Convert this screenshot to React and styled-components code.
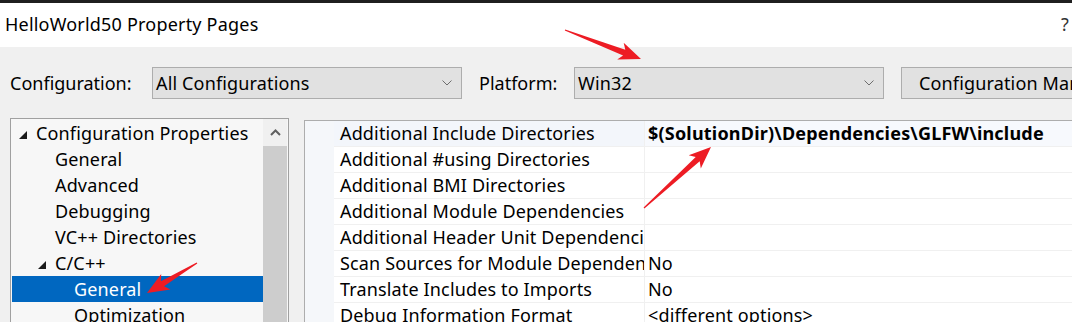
import styled, { createGlobalStyle } from 'styled-components';

const GlobalStyle = createGlobalStyle`
  html, body {
    margin: 0;
    padding: 0;
    overflow: hidden;
    background: #f0f0f0;
  }
`;

const FONT = `"Noto Sans", "Open Sans", sans-serif`;

const Page = styled.div`
  position: relative;
  width: 1072px;
  height: 322px;
  overflow: hidden;
  font-family: ${FONT};
  font-size: 18px;
  letter-spacing: 0.15px;
  color: #000;
  display: flex;
  flex-direction: column;
`;

const TopStrip = styled.div`
  height: 3px;
  flex-shrink: 0;
  background: #1f1f1f;
`;

const TitleBar = styled.div`
  height: 44px;
  flex-shrink: 0;
  background: #fff;
  display: flex;
  align-items: center;
  justify-content: space-between;
  padding: 0 3px 2px 5px;
  box-sizing: border-box;
`;

const Title = styled.span`
  letter-spacing: 0.2px;
`;

const Help = styled.span`
  color: #333;
`;

const Body = styled.div`
  flex: 1;
  min-height: 0;
  overflow: hidden;
  background: #f0f0f0;
  padding: 20px 0 0 10px;
  display: flex;
  flex-direction: column;
`;

const ConfigRow = styled.div`
  display: flex;
  align-items: center;
  height: 32px;
  flex-shrink: 0;
`;

const Label = styled.span`
  width: ${(p) => p.$w}px;
  margin-left: ${(p) => p.$ml || 0}px;
  flex-shrink: 0;
  letter-spacing: 0;
  white-space: nowrap;
`;

const Combo = styled.div`
  box-sizing: border-box;
  width: 310px;
  flex-shrink: 0;
  height: 32px;
  background: #e1e1e1;
  border: 1px solid #adadad;
  display: flex;
  align-items: center;
  justify-content: space-between;
  padding: 0 9px 0 3px;
`;

const Button = styled.div`
  box-sizing: border-box;
  margin-left: 17px;
  width: 220px;
  flex-shrink: 0;
  height: 32px;
  background: #e1e1e1;
  border: 1px solid #adadad;
  display: flex;
  align-items: center;
  padding-left: 17px;
  white-space: nowrap;
  overflow: hidden;
`;

const Panels = styled.div`
  display: flex;
  align-items: flex-start;
  margin-top: 19px;
`;

const Tree = styled.div`
  box-sizing: border-box;
  width: 279px;
  height: 230px;
  border: 1px solid #a0a0a0;
  background: #f7f7f7;
  display: flex;
  flex-shrink: 0;
`;

const TreeList = styled.div`
  flex: 1;
  padding: 1px 0 0 1px;
`;

const TreeRow = styled.div`
  height: 26px;
  display: flex;
  align-items: center;
  padding-left: ${(p) => 24 + p.$level * 19}px;
  white-space: nowrap;
  background: ${(p) => (p.$selected ? '#0067c0' : 'transparent')};
  color: ${(p) => (p.$selected ? '#fff' : '#000')};
`;

const Twisty = styled.span`
  width: 17px;
  margin-left: -17px;
  display: flex;
  align-items: center;
  padding-top: 3px;
`;

const ScrollBar = styled.div`
  width: 24px;
  height: 100%;
  margin-right: 1px;
  display: flex;
  flex-direction: column;
  background: #f0f0f0;
`;

const ScrollArrow = styled.div`
  height: 27px;
  display: flex;
  align-items: center;
  justify-content: center;
`;

const ScrollThumb = styled.div`
  flex: 1;
  background: #cdcdcd;
`;

const Grid = styled.div`
  margin-left: 15px;
  margin-top: 2px;
  flex: 1;
  border-left: 1px solid #adadad;
  border-top: 1px solid #adadad;
  background: #fff;
  display: flex;
  flex-direction: column;
  height: 230px;
`;

const GridRow = styled.div`
  display: flex;
  height: 26px;
  flex-shrink: 0;
`;

const Gutter = styled.div`
  width: 29px;
  background: #f5f7fa;
  flex-shrink: 0;
`;

const NameCell = styled.div`
  box-sizing: border-box;
  width: 310px;
  flex-shrink: 0;
  overflow: hidden;
  white-space: nowrap;
  padding-left: 6px;
  line-height: 25px;
  border-bottom: 1px solid #f0f0f0;
  background: ${(p) => (p.$active ? '#f3f6fb' : '#fff')};
`;

const ValueCell = styled.div`
  box-sizing: border-box;
  flex: 1;
  overflow: hidden;
  white-space: nowrap;
  padding-left: 3px;
  line-height: 25px;
  font-weight: ${(p) => (p.$bold ? 700 : 400)};
  letter-spacing: ${(p) => (p.$bold ? '0.2px' : '0.15px')};
  border-left: 1px solid #f0f0f0;
  border-bottom: 1px solid #f0f0f0;
  background: ${(p) => (p.$active ? '#f7f9fd' : '#fff')};
`;

const Overlay = styled.svg`
  position: absolute;
  left: 0;
  top: 0;
  pointer-events: none;
`;

const Chevron = () => (
  <svg width="10" height="6" viewBox="0 0 10 6">
    <path d="M0.5 0.5 L5 5 L9.5 0.5" fill="none" stroke="#6d6d6d" strokeWidth="1" />
  </svg>
);

const Triangle = () => (
  <svg width="8" height="8" viewBox="0 0 8 8">
    <polygon points="8,0 8,8 0,8" fill="#1a1a1a" />
  </svg>
);

const arrowPoints = (tx, ty, px, py) => {
  const dx = px - tx;
  const dy = py - ty;
  const len = Math.hypot(dx, dy);
  const ux = dx / len;
  const uy = dy / len;
  const nx = -uy;
  const ny = ux;
  const headLen = 22;
  const headHalf = 9;
  const shaftHalf = 3;
  const bx = px - ux * headLen;
  const by = py - uy * headLen;
  const nbx = bx + ux * 4;
  const nby = by + uy * 4;
  const pts = [
    [tx + nx * 0.6, ty + ny * 0.6],
    [nbx + nx * shaftHalf, nby + ny * shaftHalf],
    [bx + nx * headHalf, by + ny * headHalf],
    [px, py],
    [bx - nx * headHalf, by - ny * headHalf],
    [nbx - nx * shaftHalf, nby - ny * shaftHalf],
    [tx - nx * 0.6, ty - ny * 0.6],
  ];
  return pts.map((p) => p.map((v) => v.toFixed(1)).join(',')).join(' ');
};

const arrows = [
  [565, 30, 641, 59],
  [644, 208, 711, 147],
  [197, 263, 147, 293],
];

const treeItems = [
  { label: 'Configuration Properties', level: 0, open: true },
  { label: 'General', level: 1 },
  { label: 'Advanced', level: 1 },
  { label: 'Debugging', level: 1 },
  { label: 'VC++ Directories', level: 1 },
  { label: 'C/C++', level: 1, open: true },
  { label: 'General', level: 2, selected: true },
  { label: 'Optimization', level: 2 },
];

const props = [
  ['Additional Include Directories', '$(SolutionDir)\\Dependencies\\GLFW\\include', true],
  ['Additional #using Directories', ''],
  ['Additional BMI Directories', ''],
  ['Additional Module Dependencies', ''],
  ['Additional Header Unit Dependencies', ''],
  ['Scan Sources for Module Dependencies', 'No'],
  ['Translate Includes to Imports', 'No'],
  ['Debug Information Format', '<different options>'],
];

const App = () => {
  return (
    <Page>
      <GlobalStyle />
      <TopStrip />
      <TitleBar>
        <Title>HelloWorld50 Property Pages</Title>
        <Help>?</Help>
      </TitleBar>
      <Body>
        <ConfigRow>
          <Label $w={142}>Configuration:</Label>
          <Combo>
            <span>All Configurations</span>
            <Chevron />
          </Combo>
          <Label $w={95} $ml={17}>Platform:</Label>
          <Combo>
            <span>Win32</span>
            <Chevron />
          </Combo>
          <Button>Configuration Manager...</Button>
        </ConfigRow>
        <Panels>
          <Tree>
            <TreeList>
              {treeItems.map((it, i) => (
                <TreeRow key={i} $level={it.level} $selected={it.selected}>
                  {it.open && (
                    <Twisty>
                      <Triangle />
                    </Twisty>
                  )}
                  {it.label}
                </TreeRow>
              ))}
            </TreeList>
            <ScrollBar>
              <ScrollArrow>
                <svg width="11" height="7" viewBox="0 0 11 7">
                  <path d="M1 6 L5.5 1.5 L10 6" fill="none" stroke="#606060" strokeWidth="2" />
                </svg>
              </ScrollArrow>
              <ScrollThumb />
            </ScrollBar>
          </Tree>
          <Grid>
            {props.map(([name, value, bold], i) => (
              <GridRow key={i}>
                <Gutter />
                <NameCell $active={i === 0}>{name}</NameCell>
                <ValueCell $active={i === 0} $bold={bold}>{value}</ValueCell>
              </GridRow>
            ))}
          </Grid>
        </Panels>
      </Body>
      <Overlay width="1072" height="322">
        {arrows.map((a, i) => (
          <polygon key={i} points={arrowPoints(...a)} fill="#ed1c24" />
        ))}
      </Overlay>
    </Page>
  );
};

export default App;
